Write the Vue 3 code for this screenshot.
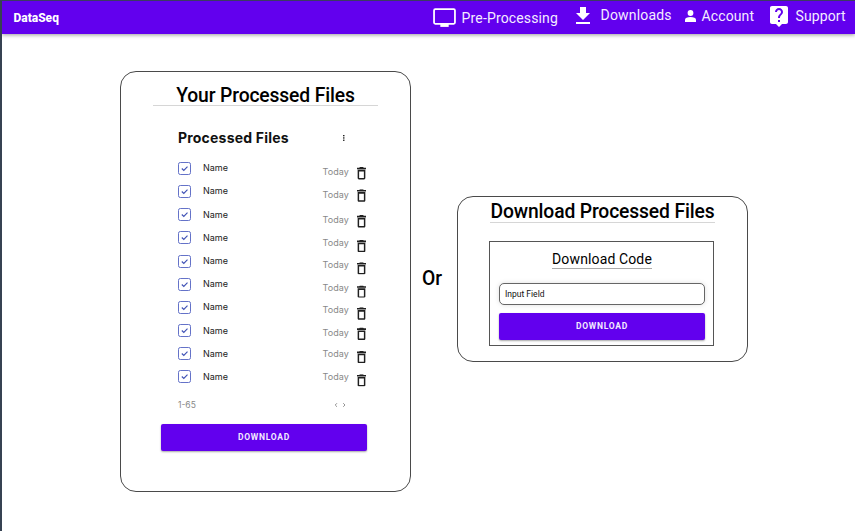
<script setup>
const files = [
  { name: 'Name', date: 'Today', dateShift: 4.3, binShift: 5 },
  { name: 'Name', date: 'Today', dateShift: 4.3, binShift: 4.3 },
  { name: 'Name', date: 'Today', dateShift: 4.6, binShift: 7.1 },
  { name: 'Name', date: 'Today', dateShift: 4.6, binShift: 7.9 },
  { name: 'Name', date: 'Today', dateShift: 4.2, binShift: 7.2 },
  { name: 'Name', date: 'Today', dateShift: 4, binShift: 7.5 },
  { name: 'Name', date: 'Today', dateShift: 2.8, binShift: 6.3 },
  { name: 'Name', date: 'Today', dateShift: 2.4, binShift: 3.6 },
  { name: 'Name', date: 'Today', dateShift: 0.4, binShift: 2.9 },
  { name: 'Name', date: 'Today', dateShift: 0.2, binShift: 3.2 },
]
const shift = (px) => ({ transform: `translateY(${px}px)` })
</script>

<template>
  <div class="page">
    <header class="nav">
      <span class="brand">DataSeq</span>
      <nav class="links">
        <a class="link pre">
          <svg class="i-screen" viewBox="0 0 22 18"><rect x="1" y="1" width="20" height="14" rx="1.2" fill="none" stroke="currentColor" stroke-width="1.700" /><path d="M7 15h8v3H7z" fill="currentColor" /></svg>
          <span class="t-pre">Pre-Processing</span>
        </a>
        <a class="link down">
          <svg class="i-down" viewBox="5 3 14 17" preserveAspectRatio="none"><path d="M19 9h-4V3H9v6H5l7 7 7-7zM5 18v2h14v-2H5z" fill="currentColor" /></svg>
          <span class="t-down">Downloads</span>
        </a>
        <a class="link acc">
          <svg class="i-user" viewBox="0 0 11 12"><circle cx="5.5" cy="3" r="2.9" fill="currentColor" /><path d="M0 12V9.8C0 7.8 2.3 7 5.5 7s5.500.8 5.500 2.800V12z" fill="currentColor" /></svg>
          <span class="t-acc">Account</span>
        </a>
        <a class="link sup">
          <svg class="i-help" viewBox="3 2 18 21" preserveAspectRatio="none"><path d="M19 2H5c-1.110 0-2 .9-2 2v14c0 1.100.890 2 2 2h4l3 3 3-3h4c1.100 0 2-.9 2-2V4c0-1.100-.9-2-2-2zm-6 16h-2v-2h2v2zm2.070-7.750l-.9.920C13.450 11.900 13 12.500 13 14h-2v-.5c0-1.100.450-2.100 1.170-2.830l1.240-1.260c.370-.360.590-.860.590-1.410 0-1.100-.9-2-2-2s-2 .9-2 2H8c0-2.210 1.790-4 4-4s4 1.790 4 4c0 .880-.360 1.680-.930 2.250z" fill="currentColor" /></svg>
          <span class="t-sup">Support</span>
        </a>
      </nav>
    </header>

    <main class="main">
      <section class="card files-card">
        <h1 class="title files-title">Your Processed Files</h1>
        <div class="list-head">
          <h2>Processed Files</h2>
          <svg class="dots" viewBox="0 0 2 6"><rect width="1.500" height="1.300" /><rect y="2.300" width="1.500" height="1.300" /><rect y="4.600" width="1.500" height="1.300" /></svg>
        </div>
        <ul class="list">
          <li v-for="(file, i) in files" :key="i" class="row">
            <svg class="check" viewBox="0 0 13 13"><rect x=".5" y=".5" width="12" height="12" rx="1.800" fill="#fff" stroke="#6472c8" /><path d="M3.800 6.500l2 1.900L9.500 4.700" fill="none" stroke="#4052b5" stroke-width="1.200" /></svg>
            <span class="name">{{ file.name }}</span>
            <span class="date" :style="shift(file.dateShift)">{{ file.date }}</span>
            <svg class="bin" viewBox="5 3 14 18" preserveAspectRatio="none" :style="shift(file.binShift)"><path d="M6 19c0 1.100.9 2 2 2h8c1.100 0 2-.9 2-2V7H6v12zM8.300 9.300h7.400v9.400H8.300V9.300zm7.200-5.300l-1-1h-5l-1 1H5v2.300h14V4h-3.500z" /></svg>
          </li>
        </ul>
        <div class="pager">
          <span class="range">1-65</span>
          <svg class="arrows" viewBox="0 0 12 6"><path d="M3 1.200L1.200 3 3 4.800M9.200 1.200L11 3 9.200 4.800" fill="none" stroke="#888" stroke-width=".9" /></svg>
        </div>
        <button class="btn files-btn">DOWNLOAD</button>
      </section>

      <span class="or">Or</span>

      <section class="card code-card">
        <h1 class="title code-title">Download Processed Files</h1>
        <div class="code-box">
          <h3><span>Download Code</span></h3>
          <input class="field" type="text" value="Input Field" />
          <button class="btn">DOWNLOAD</button>
        </div>
      </section>
    </main>
  </div>
</template>

<style>
body { margin: 0; background: #fff; overflow: hidden; }
</style>

<style scoped>
* { box-sizing: border-box; }
.page { width: 855px; height: 531px; border-left: 2px solid #364252; border-top: 1px solid #3b3c62; background: #fff; font-family: Roboto, sans-serif; color: #000; overflow: hidden; }
.nav { height: 33px; background: #6200ee; color: #fff; display: flex; justify-content: space-between; box-shadow: 0 1px 4px rgba(0, 0, 0, .4); }
.brand { margin: 10px 0 0 11.500px; font-size: 12px; line-height: 14px; font-weight: 800; }
.links { display: flex; align-items: flex-start; padding-right: 8.400px; }
.link { display: flex; align-items: flex-start; color: #f4ecff; font-size: 14px; line-height: 18px; letter-spacing: .1px; white-space: nowrap; }
.link svg { flex: none; color: #fff; }
.i-screen { width: 23px; height: 19px; margin: 7px 6px 0 0; }
.t-pre { margin-top: 7.500px; width: 97px; letter-spacing: .14px; }
.i-down { width: 14px; height: 17px; margin: 6px 11px 0 17px; }
.t-down { margin-top: 5px; width: 71px; letter-spacing: .17px; }
.i-user { width: 11px; height: 12px; margin: 9px 6px 0 13px; }
.t-acc { margin-top: 6px; width: 53px; }
.i-help { width: 18px; height: 21px; margin: 5px 8px 0 15px; }
.t-sup { margin-top: 6px; width: 51px; }
.main { display: flex; align-items: flex-start; padding: 37px 0 0 118px; }
.card { border: 1px solid #4a4a4a; border-radius: 16px; display: flex; flex-direction: column; align-items: center; background: #fff; flex: none; }
.files-card { width: 291px; height: 421px; }
.title { margin: 0; font-size: 19.300px; letter-spacing: -.14px; font-weight: 500; white-space: nowrap; text-align: center; border-bottom: 1px solid #d6d6d6; width: 225px; }
.files-title { margin-top: 12px; height: 22px; line-height: 23px; }
.list-head { width: 167px; margin: 21px 0 0 57px; height: 22px; display: flex; justify-content: space-between; align-items: center; align-self: flex-start; }
.list-head h2 { margin: 0; font: 650 14px/22px Inter, sans-serif; letter-spacing: .2px; color: #111; white-space: nowrap; }
.dots { width: 2px; height: 6px; fill: #222; }
.list { list-style: none; margin: 7.700px 0 0 57px; padding: 0; width: 190px; align-self: flex-start; }
.row { height: 23.200px; display: flex; align-items: center; font: 400 9px/12px Inter, sans-serif; }
.check { width: 13px; height: 13px; margin-right: 12px; flex: none; }
.name { color: #222; width: 119.500px; }
.date { color: #888; width: 27px; letter-spacing: .1px; }
.bin { width: 9px; height: 12.500px; margin-left: 7.500px; fill: #202020; flex: none; }
.pager { width: 168px; height: 12px; margin: 10.800px 0 0 57px; align-self: flex-start; display: flex; align-items: center; justify-content: space-between; font: 400 8.500px/12px Inter, sans-serif; color: #888; }
.arrows { width: 12px; height: 6px; }
.btn { display: block; width: 206px; height: 27px; border: 0; padding: 0; border-radius: 2px; background: #6200ee; color: #f3eaff; font: 700 8.500px/27px Roboto, sans-serif; letter-spacing: .74px; box-shadow: 0 1px 2px rgba(0, 0, 0, .35); }
.files-btn { margin: 12.500px 0 0 -3px; }
.or { width: 46px; margin-top: 196px; text-align: center; font-size: 19.300px; line-height: 24px; font-weight: 500; padding-right: 4px; }
.code-card { width: 291px; height: 166px; margin-top: 125px; }
.code-title { margin-top: 3px; height: 23px; line-height: 23px; }
.code-box { margin: 18px 0 0 -2px; width: 225px; height: 105px; border: 1px solid #555; display: flex; flex-direction: column; align-items: center; padding-left: 1px; }
.code-box h3 { margin: 9px 0 0; font-size: 14px; line-height: 17px; letter-spacing: .13px; font-weight: 400; }
.code-box h3 span { display: block; width: 100px; text-align: center; white-space: nowrap; border-bottom: 1px solid #aaa; }
.field { width: 206px; height: 22px; margin: 14px 0 8px; border: 1px solid #666; border-radius: 5px; padding: 0 5px; font: 400 8.500px/20px Roboto, sans-serif; color: #111; background: #fff; outline: 0; box-shadow: 0 0 5px rgba(0, 0, 0, .13); }
</style>
